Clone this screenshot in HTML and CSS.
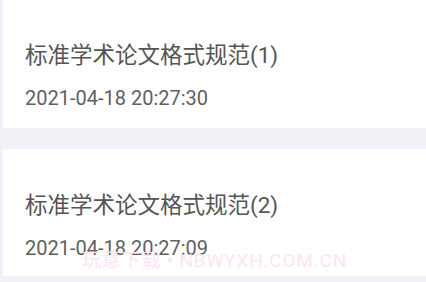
FILE: index.html
```html
<!DOCTYPE html>
<html>
<head>
<meta charset="utf-8">
<link rel="stylesheet" href="styles.css">
</head>
<body>
<div class="list">
  <div class="card first">
    <div class="title">标准学术论文格式规范(1)</div>
    <div class="date">2021-04-18 20:27:30</div>
  </div>
  <div class="card">
    <div class="title">标准学术论文格式规范(2)</div>
    <div class="date">2021-04-18 20:27:09</div>
  </div>
</div>
<div class="watermark">玩意下载 • NBWYXH.COM.CN</div>
</body>
</html>
```
FILE: styles.css
```css
html, body {
  margin: 0;
  padding: 0;
}
body {
  width: 426px;
  height: 282px;
  overflow: hidden;
  background: #f1f2f8;
  position: relative;
  font-family: Roboto, "Noto Sans CJK SC", sans-serif;
}
.list {
  display: flex;
  flex-direction: column;
  gap: 21px;
}
.card {
  margin-left: 3px;
  height: 127px;
  background: #ffffff;
  padding: 42px 0 0 22px;
  box-sizing: border-box;
}
.card.first {
  height: 128px;
  padding-top: 41px;
}
.title {
  font-size: 22.5px;
  line-height: 29px;
  color: #555555;
}
.date {
  margin-top: 22px;
  font-size: 20px;
  line-height: 12px;
  color: #606060;
}
.watermark {
  position: absolute;
  left: 82px;
  top: 254px;
  font-size: 19px;
  line-height: 13px;
  letter-spacing: 0.8px;
  color: #fde4f3;
  white-space: nowrap;
}
```
